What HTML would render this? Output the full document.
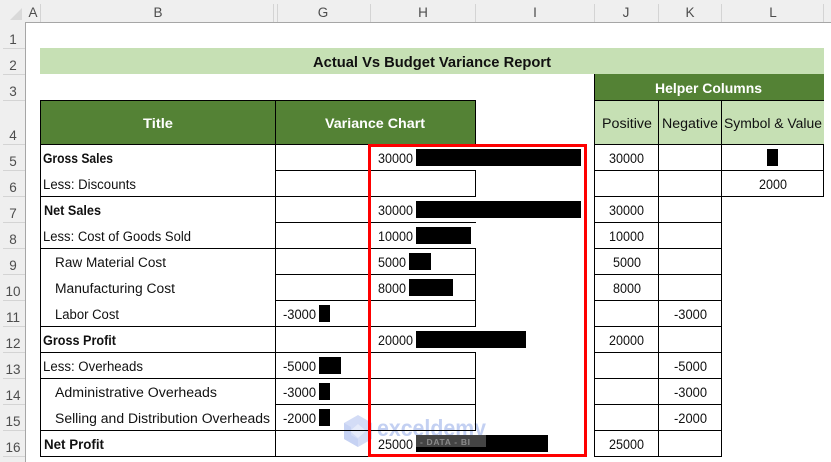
<!DOCTYPE html>
<html><head><meta charset="utf-8"><style>
html,body{margin:0;padding:0;background:#fff;width:831px;height:462px;overflow:hidden}
svg{display:block}
text{font-family:"Liberation Sans",sans-serif;font-size:13.5px;fill:#111}
.b{font-weight:bold}
.w{font-weight:bold;fill:#fff}
.h{fill:#4d4d4d;font-size:13.5px}
</style></head><body>
<svg width="831" height="462" viewBox="0 0 831 462" xmlns="http://www.w3.org/2000/svg">
<g shape-rendering="crispEdges">
<rect x="0" y="0" width="831" height="22" fill="#efefef"/>
<rect x="0" y="22" width="25" height="440" fill="#efefef"/>
<rect x="25" y="22" width="806" height="1" fill="#a6a6a6"/>
<rect x="25" y="22" width="1" height="440" fill="#a6a6a6"/>
<g fill="#d4d4d4">
<rect x="40" y="4" width="1" height="18"/><rect x="273" y="4" width="1" height="18"/><rect x="277" y="4" width="1" height="18"/><rect x="370" y="4" width="1" height="18"/><rect x="475" y="4" width="1" height="18"/><rect x="594" y="4" width="1" height="18"/><rect x="658" y="4" width="1" height="18"/><rect x="721" y="4" width="1" height="18"/><rect x="823" y="4" width="1" height="18"/>
<rect x="3" y="48" width="22" height="1"/><rect x="3" y="74" width="22" height="1"/><rect x="3" y="100" width="22" height="1"/><rect x="3" y="144" width="22" height="1"/><rect x="3" y="170" width="22" height="1"/><rect x="3" y="196" width="22" height="1"/><rect x="3" y="222" width="22" height="1"/><rect x="3" y="248" width="22" height="1"/><rect x="3" y="274" width="22" height="1"/><rect x="3" y="300" width="22" height="1"/><rect x="3" y="326" width="22" height="1"/><rect x="3" y="352" width="22" height="1"/><rect x="3" y="378" width="22" height="1"/><rect x="3" y="404" width="22" height="1"/><rect x="3" y="430" width="22" height="1"/><rect x="3" y="456" width="22" height="1"/>
</g>
<polygon points="22,8 22,20 10,20" fill="#d9d9d9" shape-rendering="auto"/>
<rect x="40" y="48" width="784" height="26" fill="#c6e0b4"/>
<rect x="594" y="74" width="230" height="26" fill="#548235"/>
<rect x="594" y="100" width="230" height="44" fill="#c6e0b4"/>
<rect x="40" y="100" width="436" height="44" fill="#548235"/>
</g>

<!-- watermark (under grid lines) -->
<polygon points="358,415 372,423 372,439 358,447 344,439 344,423" fill="#d3dcf6"/>
<polygon points="358,424 366,431 358,438 350,431" fill="#e6ebfa"/>
<polygon points="344,423 351,427 351,435 358,439 358,447 344,439" fill="#c6d2f3"/>
<text x="377" y="436" textLength="109" lengthAdjust="spacingAndGlyphs" style="font-size:23px;font-weight:bold;fill:#c3d0f2">exceldemy</text>

<g shape-rendering="crispEdges">
<g fill="#000">
<!-- B column horizontals -->
<rect x="40" y="100" width="436" height="1"/>
<rect x="40" y="144" width="436" height="1"/>
<rect x="40" y="196" width="436" height="1"/>
<rect x="40" y="248" width="436" height="1"/>
<rect x="40" y="326" width="436" height="1"/>
<rect x="40" y="352" width="436" height="1"/>
<rect x="40" y="378" width="436" height="1"/>
<rect x="40" y="430" width="436" height="1"/>
<rect x="40" y="456" width="330" height="1"/>
<!-- G/H horizontals -->
<rect x="275" y="170" width="201" height="1"/>
<rect x="275" y="222" width="201" height="1"/>
<rect x="275" y="274" width="201" height="1"/>
<rect x="275" y="300" width="201" height="1"/>
<rect x="275" y="404" width="201" height="1"/>
<!-- verticals -->
<rect x="40" y="100" width="1" height="357"/>
<rect x="275" y="100" width="1" height="357"/>
<rect x="475" y="100" width="1" height="44"/>
<rect x="475" y="170" width="1" height="27"/>
<rect x="475" y="248" width="1" height="79"/>
<rect x="475" y="352" width="1" height="79"/>
<!-- helper grid -->
<rect x="594" y="74" width="1" height="383"/>
<rect x="658" y="100" width="1" height="357"/>
<rect x="721" y="100" width="1" height="97"/>
<rect x="721" y="197" width="1" height="260"/>
<rect x="823" y="144" width="1" height="53"/>
<rect x="594" y="100" width="230" height="1"/>
<rect x="594" y="144" width="230" height="1"/>
<rect x="594" y="170" width="230" height="1"/>
<rect x="594" y="196" width="230" height="1"/>
<rect x="594" y="222" width="128" height="1"/>
<rect x="594" y="248" width="128" height="1"/>
<rect x="594" y="274" width="128" height="1"/>
<rect x="594" y="300" width="128" height="1"/>
<rect x="594" y="326" width="128" height="1"/>
<rect x="594" y="352" width="128" height="1"/>
<rect x="594" y="378" width="128" height="1"/>
<rect x="594" y="404" width="128" height="1"/>
<rect x="594" y="430" width="128" height="1"/>
<rect x="594" y="456" width="128" height="1"/>
<!-- bars -->
<rect x="416" y="149" width="165" height="17"/>
<rect x="416" y="201" width="165" height="17"/>
<rect x="416" y="227" width="55" height="17"/>
<rect x="409" y="253" width="22" height="17"/>
<rect x="409" y="279" width="44" height="17"/>
<rect x="319" y="305" width="11" height="17"/>
<rect x="416" y="331" width="110" height="17"/>
<rect x="319" y="357" width="22" height="17"/>
<rect x="319" y="383" width="11" height="17"/>
<rect x="319" y="409" width="11" height="17"/>
<rect x="416" y="435" width="132" height="17"/>
<rect x="767" y="149" width="11" height="17"/>
</g>
<rect x="416" y="435" width="70" height="12" fill="#444"/>
<!-- red box -->
<g fill="#fe0000">
<rect x="368" y="144" width="219" height="3"/>
<rect x="368" y="454" width="219" height="3"/>
<rect x="368" y="144" width="3" height="313"/>
<rect x="584" y="144" width="3" height="313"/>
</g>
</g>

<!-- column headers -->
<text class="h" x="33" y="17" text-anchor="middle">A</text>
<text class="h" x="158" y="17" text-anchor="middle">B</text>
<text class="h" x="323" y="17" text-anchor="middle">G</text>
<text class="h" x="423" y="17" text-anchor="middle">H</text>
<text class="h" x="535" y="17" text-anchor="middle">I</text>
<text class="h" x="626" y="17" text-anchor="middle">J</text>
<text class="h" x="690" y="17" text-anchor="middle">K</text>
<text class="h" x="773" y="17" text-anchor="middle">L</text>
<!-- row headers -->
<text class="h" x="13" y="44" text-anchor="middle">1</text>
<text class="h" x="13" y="70" text-anchor="middle">2</text>
<text class="h" x="13" y="96" text-anchor="middle">3</text>
<text class="h" x="13" y="140" text-anchor="middle">4</text>
<text class="h" x="13" y="166" text-anchor="middle">5</text>
<text class="h" x="13" y="192" text-anchor="middle">6</text>
<text class="h" x="13" y="218" text-anchor="middle">7</text>
<text class="h" x="13" y="244" text-anchor="middle">8</text>
<text class="h" x="13" y="270" text-anchor="middle">9</text>
<text class="h" x="13" y="296" text-anchor="middle">10</text>
<text class="h" x="13" y="322" text-anchor="middle">11</text>
<text class="h" x="13" y="348" text-anchor="middle">12</text>
<text class="h" x="13" y="374" text-anchor="middle">13</text>
<text class="h" x="13" y="400" text-anchor="middle">14</text>
<text class="h" x="13" y="426" text-anchor="middle">15</text>
<text class="h" x="13" y="452" text-anchor="middle">16</text>

<!-- titles -->
<text class="b" x="313" y="67" textLength="238" lengthAdjust="spacingAndGlyphs" style="font-size:14.5px">Actual Vs Budget Variance Report</text>
<text class="w" x="143" y="128" textLength="30" lengthAdjust="spacingAndGlyphs">Title</text>
<text class="w" x="325" y="128" textLength="100" lengthAdjust="spacingAndGlyphs">Variance Chart</text>
<text class="w" x="655" y="93" textLength="107" lengthAdjust="spacingAndGlyphs">Helper Columns</text>
<text x="602" y="128" textLength="50" lengthAdjust="spacingAndGlyphs">Positive</text>
<text x="662" y="128" textLength="56" lengthAdjust="spacingAndGlyphs">Negative</text>
<text x="724" y="128" textLength="98" lengthAdjust="spacingAndGlyphs">Symbol &amp; Value</text>

<!-- labels -->
<text class="b" x="43" y="163" textLength="70" lengthAdjust="spacingAndGlyphs">Gross Sales</text>
<text x="43" y="189" textLength="93" lengthAdjust="spacingAndGlyphs">Less: Discounts</text>
<text class="b" x="44" y="215" textLength="57" lengthAdjust="spacingAndGlyphs">Net Sales</text>
<text x="43" y="241" textLength="148" lengthAdjust="spacingAndGlyphs">Less: Cost of Goods Sold</text>
<text x="55" y="267" textLength="111" lengthAdjust="spacingAndGlyphs">Raw Material Cost</text>
<text x="55" y="293" textLength="120" lengthAdjust="spacingAndGlyphs">Manufacturing Cost</text>
<text x="55" y="319" textLength="64" lengthAdjust="spacingAndGlyphs">Labor Cost</text>
<text class="b" x="43" y="345" textLength="73" lengthAdjust="spacingAndGlyphs">Gross Profit</text>
<text x="43" y="371" textLength="100" lengthAdjust="spacingAndGlyphs">Less: Overheads</text>
<text x="55" y="397" textLength="162" lengthAdjust="spacingAndGlyphs">Administrative Overheads</text>
<text x="55" y="423" textLength="215" lengthAdjust="spacingAndGlyphs">Selling and Distribution Overheads</text>
<text class="b" x="44" y="449" textLength="60" lengthAdjust="spacingAndGlyphs">Net Profit</text>

<!-- chart numbers -->
<text x="378" y="163" textLength="35" lengthAdjust="spacingAndGlyphs">30000</text>
<text x="378" y="215" textLength="35" lengthAdjust="spacingAndGlyphs">30000</text>
<text x="378" y="241" textLength="35" lengthAdjust="spacingAndGlyphs">10000</text>
<text x="378" y="267" textLength="28" lengthAdjust="spacingAndGlyphs">5000</text>
<text x="378" y="293" textLength="28" lengthAdjust="spacingAndGlyphs">8000</text>
<text x="283" y="319" textLength="33" lengthAdjust="spacingAndGlyphs">-3000</text>
<text x="378" y="345" textLength="35" lengthAdjust="spacingAndGlyphs">20000</text>
<text x="283" y="371" textLength="33" lengthAdjust="spacingAndGlyphs">-5000</text>
<text x="283" y="397" textLength="33" lengthAdjust="spacingAndGlyphs">-3000</text>
<text x="283" y="423" textLength="33" lengthAdjust="spacingAndGlyphs">-2000</text>
<text x="378" y="449" textLength="35" lengthAdjust="spacingAndGlyphs">25000</text>

<!-- helper numbers -->
<text x="609" y="163" textLength="35" lengthAdjust="spacingAndGlyphs">30000</text>
<text x="759" y="189" textLength="28" lengthAdjust="spacingAndGlyphs">2000</text>
<text x="609" y="215" textLength="35" lengthAdjust="spacingAndGlyphs">30000</text>
<text x="609" y="241" textLength="35" lengthAdjust="spacingAndGlyphs">10000</text>
<text x="613" y="267" textLength="28" lengthAdjust="spacingAndGlyphs">5000</text>
<text x="613" y="293" textLength="28" lengthAdjust="spacingAndGlyphs">8000</text>
<text x="674" y="319" textLength="33" lengthAdjust="spacingAndGlyphs">-3000</text>
<text x="609" y="345" textLength="35" lengthAdjust="spacingAndGlyphs">20000</text>
<text x="674" y="371" textLength="33" lengthAdjust="spacingAndGlyphs">-5000</text>
<text x="674" y="397" textLength="33" lengthAdjust="spacingAndGlyphs">-3000</text>
<text x="674" y="423" textLength="33" lengthAdjust="spacingAndGlyphs">-2000</text>
<text x="609" y="449" textLength="35" lengthAdjust="spacingAndGlyphs">25000</text>

<text x="420" y="445" textLength="50" style="font-size:8.5px;font-weight:bold;fill:#8a8a8a">- DATA - BI</text>
</svg>
</body></html>
